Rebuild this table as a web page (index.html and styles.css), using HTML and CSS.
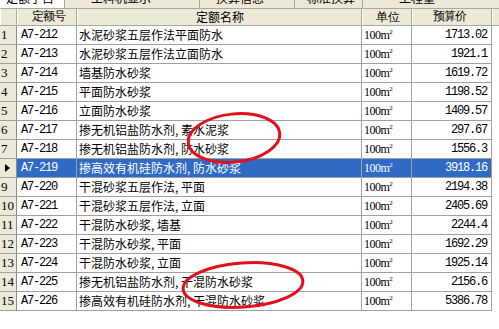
FILE: index.html
```html
<!DOCTYPE html>
<html>
<head>
<meta charset="utf-8">
<link rel="stylesheet" href="styles.css">
</head>
<body>
<div class="page">
  <div class="tabs">
    <div class="tab active"><span>定额子目</span></div>
    <div class="tab t2"><span>工料机显示</span></div>
    <div class="tab t3"><span>换算信息</span></div>
    <div class="tab t4"><span>标准换算</span></div>
    <div class="tab t5"><span>工程量</span></div>
  </div>
  <div class="grid">
    <div class="row head">
      <div class="c ind"></div>
      <div class="c code">定额号</div>
      <div class="c name">定额名称</div>
      <div class="c unit">单位</div>
      <div class="c price">预算价</div>
      <div class="c fill"></div>
    </div>
    <div class="row"><div class="c ind">1</div><div class="c code">A7-212</div><div class="c name">水泥砂浆五层作法平面防水</div><div class="c unit">100m<sup>2</sup></div><div class="c price">1713.02</div><div class="c fill"></div></div>
    <div class="row"><div class="c ind">2</div><div class="c code">A7-213</div><div class="c name">水泥砂浆五层作法立面防水</div><div class="c unit">100m<sup>2</sup></div><div class="c price">1921.1</div><div class="c fill"></div></div>
    <div class="row"><div class="c ind">3</div><div class="c code">A7-214</div><div class="c name">墙基防水砂浆</div><div class="c unit">100m<sup>2</sup></div><div class="c price">1619.72</div><div class="c fill"></div></div>
    <div class="row"><div class="c ind">4</div><div class="c code">A7-215</div><div class="c name">平面防水砂浆</div><div class="c unit">100m<sup>2</sup></div><div class="c price">1198.52</div><div class="c fill"></div></div>
    <div class="row"><div class="c ind">5</div><div class="c code">A7-216</div><div class="c name">立面防水砂浆</div><div class="c unit">100m<sup>2</sup></div><div class="c price">1409.57</div><div class="c fill"></div></div>
    <div class="row"><div class="c ind">6</div><div class="c code">A7-217</div><div class="c name">掺无机铝盐防水剂, 素水泥浆</div><div class="c unit">100m<sup>2</sup></div><div class="c price">297.67</div><div class="c fill"></div></div>
    <div class="row"><div class="c ind">7</div><div class="c code">A7-218</div><div class="c name">掺无机铝盐防水剂, 防水砂浆</div><div class="c unit">100m<sup>2</sup></div><div class="c price">1556.3</div><div class="c fill"></div></div>
    <div class="row sel"><div class="c ind"><span class="arrow"></span></div><div class="c code">A7-219</div><div class="c name">掺高效有机硅防水剂, 防水砂浆</div><div class="c unit">100m<sup>2</sup></div><div class="c price">3918.16</div><div class="c fill"></div></div>
    <div class="row"><div class="c ind">9</div><div class="c code">A7-220</div><div class="c name">干混砂浆五层作法, 平面</div><div class="c unit">100m<sup>2</sup></div><div class="c price">2194.38</div><div class="c fill"></div></div>
    <div class="row"><div class="c ind">10</div><div class="c code">A7-221</div><div class="c name">干混砂浆五层作法, 立面</div><div class="c unit">100m<sup>2</sup></div><div class="c price">2405.69</div><div class="c fill"></div></div>
    <div class="row"><div class="c ind">11</div><div class="c code">A7-222</div><div class="c name">干混防水砂浆, 墙基</div><div class="c unit">100m<sup>2</sup></div><div class="c price">2244.4</div><div class="c fill"></div></div>
    <div class="row"><div class="c ind">12</div><div class="c code">A7-223</div><div class="c name">干混防水砂浆, 平面</div><div class="c unit">100m<sup>2</sup></div><div class="c price">1692.29</div><div class="c fill"></div></div>
    <div class="row"><div class="c ind">13</div><div class="c code">A7-224</div><div class="c name">干混防水砂浆, 立面</div><div class="c unit">100m<sup>2</sup></div><div class="c price">1925.14</div><div class="c fill"></div></div>
    <div class="row"><div class="c ind">14</div><div class="c code">A7-225</div><div class="c name">掺无机铝盐防水剂, 干混防水砂浆</div><div class="c unit">100m<sup>2</sup></div><div class="c price">2156.6</div><div class="c fill"></div></div>
    <div class="row"><div class="c ind">15</div><div class="c code">A7-226</div><div class="c name">掺高效有机硅防水剂, 干混防水砂浆</div><div class="c unit">100m<sup>2</sup></div><div class="c price">5386.78</div><div class="c fill"></div></div>
  </div>
  <svg class="marks" width="499" height="329" viewBox="0 0 499 329">
    <ellipse cx="234" cy="138" rx="46" ry="24" transform="rotate(-6 234 138)" fill="none" stroke="#e3101a" stroke-width="3"/>
    <ellipse cx="243" cy="285" rx="60" ry="22" transform="rotate(-4 243 285)" fill="none" stroke="#e3101a" stroke-width="3"/>
  </svg>
</div>
</body>
</html>
```
FILE: styles.css
```css
* { box-sizing: border-box; }
html, body { margin: 0; padding: 0; background: #fff; }
.page {
  position: relative;
  width: 499px;
  height: 329px;
  overflow: hidden;
  font-family: "Noto Sans CJK SC", sans-serif;
  font-size: 12px;
  color: #000;
}
.tabs {
  display: flex;
  height: 9px;
  background: #ece9d8;
  border-bottom: 1px solid #aca899;
  overflow: hidden;
}
.tab {
  position: relative;
  height: 9px;
  border-right: 1px solid #aca899;
  overflow: hidden;
  font-size: 12px;
  line-height: 12px;
}
.tab span { display: block; margin-top: -8px; padding-left: 6px; white-space: nowrap; }
.tab.active { width: 65px; background: #fff; }
.tab.t2 { width: 135px; padding-left: 20px; }
.tab.t3 { width: 95px; padding-left: 10px; }
.tab.t4 { width: 68px; padding-left: 6px; }
.tab.t5 { flex: 1; padding-left: 30px; border-right: none; }

.grid { display: flex; flex-direction: column; }
.row {
  display: grid;
  grid-template-columns: 17px 60px 285px 50px 80px 1fr;
  height: 19px;
}
.c {
  border-right: 1px solid #a0a0a0;
  border-bottom: 1px solid #a0a0a0;
  line-height: 18px;
  white-space: nowrap;
  overflow: hidden;
}
.row.head { height: 17px; background: #ece9d8; }
.row.head .c {
  border-right: 1px solid #aca899;
  border-bottom: 1px solid #aca899;
  box-shadow: inset 1px 0 0 #fff;
  text-align: center;
  line-height: 16px;
}
.row.head .c.fill { border-right: none; }
.ind {
  background: #ece9d8;
  font-family: "Liberation Serif", serif;
  font-size: 13px;
  padding-left: 1px;
  border-right-color: #8c8c8c;
}
.code {
  font-family: "Liberation Mono", monospace;
  font-size: 12px;
  letter-spacing: -1.2px;
  padding-left: 4px;
}
.name { padding-left: 2px; }
.unit {
  font-family: "Liberation Serif", serif;
  font-size: 12px;
  padding-left: 2px;
  letter-spacing: -0.5px;
}
.unit sup { font-size: 7px; vertical-align: 5px; line-height: 0; }
.price {
  font-family: "Liberation Mono", monospace;
  font-size: 12px;
  letter-spacing: -1.2px;
  text-align: right;
  padding-right: 4px;
}
.fill { border-right: none; border-bottom-color: transparent; }
.row.sel .code, .row.sel .name, .row.sel .unit, .row.sel .price {
  background: #316ac5;
  color: #fff;
}
.arrow {
  display: inline-block;
  width: 0; height: 0;
  margin-left: 4px;
  margin-top: 5px;
  vertical-align: top;
  border-top: 4px solid transparent;
  border-bottom: 4px solid transparent;
  border-left: 5px solid #000;
}
.marks { position: absolute; left: 0; top: 0; pointer-events: none; }
```
